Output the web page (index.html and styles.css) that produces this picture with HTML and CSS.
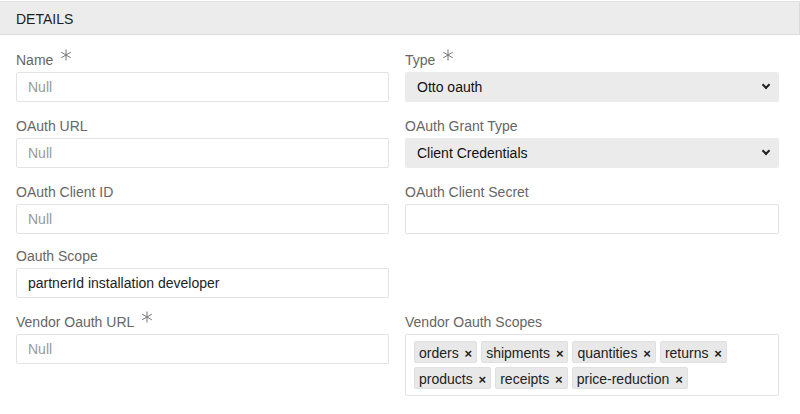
FILE: index.html
```html
<!DOCTYPE html>
<html lang="en">

<head>
    <meta charset="UTF-8">
    <meta name="viewport" content="width=device-width, initial-scale=1.0">
    <title>Details</title>
    <link rel="stylesheet" href="styles.css">
</head>

<body>
    <div class="panel">
        <div class="panel-head">DETAILS</div>
        <div class="panel-body">
            <div class="field">
                <label>Name <svg class="req" viewBox="0 0 12 12"><path d="M6 0.5V11.5M1.2 3.2L10.8 8.8M1.2 8.8L10.8 3.2"/></svg></label>
                <input type="text" placeholder="Null">
            </div>
            <div class="field">
                <label>Type <svg class="req" viewBox="0 0 12 12"><path d="M6 0.5V11.5M1.2 3.2L10.8 8.8M1.2 8.8L10.8 3.2"/></svg></label>
                <div class="select">Otto oauth <span class="caret"></span></div>
            </div>

            <div class="field">
                <label>OAuth URL</label>
                <input type="text" placeholder="Null">
            </div>
            <div class="field">
                <label>OAuth Grant Type</label>
                <div class="select">Client Credentials <span class="caret"></span></div>
            </div>

            <div class="field short">
                <label>OAuth Client ID</label>
                <input type="text" placeholder="Null">
            </div>
            <div class="field short">
                <label>OAuth Client Secret</label>
                <input type="text">
            </div>

            <div class="field">
                <label>Oauth Scope</label>
                <input type="text" value="partnerId installation developer">
            </div>
            <div class="field"></div>

            <div class="field">
                <label>Vendor Oauth URL <svg class="req" viewBox="0 0 12 12"><path d="M6 0.5V11.5M1.2 3.2L10.8 8.8M1.2 8.8L10.8 3.2"/></svg></label>
                <input type="text" placeholder="Null">
            </div>
            <div class="field">
                <label>Vendor Oauth Scopes</label>
                <div class="tags">
                    <span class="tag">orders <b>&times;</b></span>
                    <span class="tag">shipments <b>&times;</b></span>
                    <span class="tag">quantities <b>&times;</b></span>
                    <span class="tag">returns <b>&times;</b></span>
                    <span class="tag">products <b>&times;</b></span>
                    <span class="tag">receipts <b>&times;</b></span>
                    <span class="tag">price-reduction <b>&times;</b></span>
                </div>
            </div>
        </div>
    </div>
</body>

</html>
```

FILE: styles.css
```css
* {
    margin: 0;
    padding: 0;
    box-sizing: border-box;
}

body {
    font-family: "Liberation Sans", Arial, sans-serif;
    font-size: 14px;
    color: #222;
    background: #fff;
}

.panel {
    margin-top: 1px;
}

.panel-head {
    height: 34px;
    line-height: 34px;
    padding-left: 16px;
    background-color: #ececec;
    border-top: 1px solid #e2e2e2;
    border-bottom: 1px solid #dcdcdc;
    border-right: 1px solid #dcdcdc;
    color: #1e1e1e;
}

.panel-body {
    display: grid;
    grid-template-columns: 373px 374px;
    column-gap: 16px;
    padding: 13px 0 0 16px;
}

.field {
    min-height: 66px;
}

.field.short {
    min-height: 64px;
}

label {
    display: block;
    height: 24px;
    line-height: 24px;
    color: #666;
}

.req {
    width: 12px;
    height: 12px;
    margin-left: 3px;
    vertical-align: 4px;
    fill: none;
    stroke: #777;
    stroke-width: 1;
}

input {
    display: block;
    width: 100%;
    height: 30px;
    border: 1px solid #e3e3e3;
    border-radius: 2px;
    padding: 0 11px;
    font: inherit;
    color: #222;
}

input::placeholder {
    color: #999;
}

.select {
    position: relative;
    height: 30px;
    line-height: 30px;
    padding: 0 12px;
    background-color: #ebebeb;
    border-radius: 2px;
    color: #111;
}

.caret {
    position: absolute;
    right: 10px;
    top: 10px;
    width: 6px;
    height: 6px;
    border-right: 2px solid #222;
    border-bottom: 2px solid #222;
    transform: rotate(45deg);
}

.tags {
    display: flex;
    flex-wrap: wrap;
    gap: 4px;
    border: 1px solid #e3e3e3;
    border-radius: 2px;
    padding: 6px 10px 6px 8px;
    min-height: 61px;
    align-content: flex-start;
}

.tag {
    display: inline-block;
    height: 22px;
    line-height: 22px;
    padding: 0 4px;
    background-color: #e8e8e8;
    border: 1px solid #e0e0e0;
    border-radius: 2px;
    color: #222;
}

.tag b {
    font-size: 13px;
    margin-left: 2px;
}
```
